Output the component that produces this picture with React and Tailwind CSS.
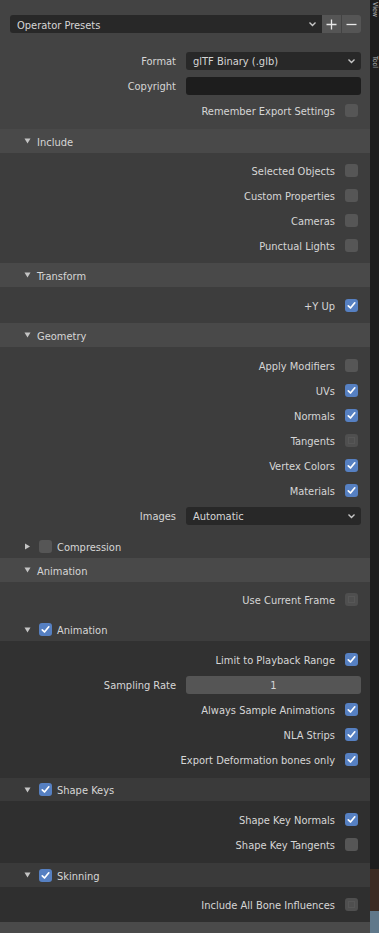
import React from "react";

const font = { fontFamily: '"DejaVu Sans Condensed", "DejaVu Sans", sans-serif' };
const txt = "text-[11px] text-[#d6d6d6] leading-none pt-[2px]";

function Check({ checked, disabled }) {
  if (checked) {
    return (
      <div className="w-[13px] h-[13px] rounded-[3px] bg-[#5680c2] flex items-center justify-center shrink-0">
        <svg width="11" height="11" viewBox="0 0 11 11">
          <polyline points="2.3,5.8 4.5,8 8.8,2.8" fill="none" stroke="#ffffff" strokeWidth="1.7" strokeLinecap="round" strokeLinejoin="round" />
        </svg>
      </div>
    );
  }
  if (disabled) {
    return (
      <div className="w-[13px] h-[13px] rounded-[3px] bg-[#4f4f4f] flex items-center justify-center shrink-0">
        <div className="w-[7px] h-[7px] border border-[#575757]" />
      </div>
    );
  }
  return <div className="w-[13px] h-[13px] rounded-[3px] bg-[#565656] shrink-0" />;
}

function CheckRow({ label, checked, disabled }) {
  return (
    <div className="h-[25px] flex items-center justify-end pr-[12px] gap-[10px]">
      <span className={txt}>{label}</span>
      <Check checked={checked} disabled={disabled} />
    </div>
  );
}

function Chevron() {
  return (
    <svg width="9" height="6" viewBox="0 0 9 6">
      <polyline points="1.5,1.5 4.5,4.5 7.5,1.5" fill="none" stroke="#c8c8c8" strokeWidth="1.4" />
    </svg>
  );
}

function FieldRow({ label, children }) {
  return (
    <div className="h-[25px] flex items-center">
      <div className={`w-[176px] text-right ${txt}`}>{label}</div>
      <div className="ml-[10px] w-[175px] h-[18px]">{children}</div>
    </div>
  );
}

function Tri({ open = true }) {
  return open ? (
    <svg width="7" height="6" viewBox="0 0 7 6" className="shrink-0">
      <polygon points="0.5,0.5 6.5,0.5 3.5,5.5" fill="#c4c4c4" />
    </svg>
  ) : (
    <svg width="7" height="7" viewBox="0 0 7 7" className="shrink-0">
      <polygon points="1,0.5 6,3.5 1,6.5" fill="#c4c4c4" />
    </svg>
  );
}

function Header({ label, h = 24, bg = "bg-[#494949]" }) {
  return (
    <div className={`${bg} flex items-center pl-[24px]`} style={{ height: h }}>
      <Tri />
      <span className={`ml-[6px] ${txt}`}>{label}</span>
    </div>
  );
}

function SubHeader({ label, checked, open = true, h = 23, bg }) {
  return (
    <div className={`${bg} flex items-center pl-[24px]`} style={{ height: h }}>
      <Tri open={open} />
      <div className="ml-[8px]">
        <Check checked={checked} />
      </div>
      <span className={`ml-[5px] ${txt}`}>{label}</span>
    </div>
  );
}

export default function App() {
  return (
    <div className="flex w-[379px] h-[933px] overflow-hidden bg-[#1d1d1d]" style={font}>
      <div className="w-[370px] flex flex-col bg-[#3d3d3d]">
        {/* top area */}
        <div className="h-[129px] bg-[#434343] pt-[15px] pl-[10px]">
          <div className="flex h-[18px]">
            <div className="w-[312px] h-[18px] bg-[#282828] rounded-l-[3px] flex items-center pl-[7px] pr-[5px] justify-between">
              <span className={txt}>Operator Presets</span>
              <Chevron />
            </div>
            <div className="w-[19px] h-[18px] bg-[#555555] flex items-center justify-center">
              <svg width="11" height="11" viewBox="0 0 11 11"><path d="M5.5 0.5V10.5M0.5 5.5H10.5" stroke="#e8e8e8" strokeWidth="1.3" /></svg>
            </div>
            <div className="w-[19px] h-[18px] bg-[#555555] ml-[1px] rounded-r-[3px] flex items-center justify-center">
              <svg width="11" height="11" viewBox="0 0 11 11"><path d="M0.5 5.5H10.5" stroke="#e8e8e8" strokeWidth="1.3" /></svg>
            </div>
          </div>
          <div className="mt-[15px] -ml-[10px]">
            <FieldRow label="Format">
              <div className="h-full bg-[#282828] rounded-[3px] flex items-center justify-between pl-[7px] pr-[5px]">
                <span className={txt}>glTF Binary (.glb)</span>
                <Chevron />
              </div>
            </FieldRow>
            <FieldRow label="Copyright">
              <div className="h-full bg-[#1d1d1d] rounded-[3px]" />
            </FieldRow>
            <CheckRow label="Remember Export Settings" />
          </div>
        </div>

        <Header label="Include" />
        <div className="pt-[5px] pb-[5px]">
          <CheckRow label="Selected Objects" />
          <CheckRow label="Custom Properties" />
          <CheckRow label="Cameras" />
          <CheckRow label="Punctual Lights" />
        </div>

        <Header label="Transform" />
        <div className="pt-[6px] pb-[5px]">
          <CheckRow label="+Y Up" checked />
        </div>

        <Header label="Geometry" />
        <div className="pt-[6px] pb-[7px]">
          <CheckRow label="Apply Modifiers" />
          <CheckRow label="UVs" checked />
          <CheckRow label="Normals" checked />
          <CheckRow label="Tangents" disabled />
          <CheckRow label="Vertex Colors" checked />
          <CheckRow label="Materials" checked />
          <FieldRow label="Images">
            <div className="h-full bg-[#282828] rounded-[3px] flex items-center justify-between pl-[7px] pr-[5px]">
              <span className={txt}>Automatic</span>
              <Chevron />
            </div>
          </FieldRow>
        </div>
        <SubHeader label="Compression" open={false} bg="bg-[#3d3d3d]" />

        <Header label="Animation" />
        <div className="pt-[5px] pb-[6px]">
          <CheckRow label="Use Current Frame" disabled />
        </div>
        <SubHeader label="Animation" checked bg="bg-[#3d3d3d]" />
        <div className="pt-[6px] pb-[6px] bg-[#313131]">
          <CheckRow label="Limit to Playback Range" checked />
          <FieldRow label="Sampling Rate">
            <div className="h-full bg-[#555555] rounded-[3px] flex items-center justify-center">
              <span className={txt}>1</span>
            </div>
          </FieldRow>
          <CheckRow label="Always Sample Animations" checked />
          <CheckRow label="NLA Strips" checked />
          <CheckRow label="Export Deformation bones only" checked />
        </div>

        <SubHeader label="Shape Keys" checked bg="bg-[#3a3a3a]" />
        <div className="pt-[6px] pb-[6px] bg-[#2f2f2f]">
          <CheckRow label="Shape Key Normals" checked />
          <CheckRow label="Shape Key Tangents" />
        </div>

        <SubHeader label="Skinning" checked h={24} bg="bg-[#3a3a3a]" />
        <div className="pt-[5px] pb-[5px] bg-[#2f2f2f]">
          <CheckRow label="Include All Bone Influences" disabled />
        </div>
        <div className="flex-1 bg-[#4a4a4a]" />
      </div>

      {/* right tab strip */}
      <div className="w-[9px] flex flex-col bg-[#1d1d1d] overflow-hidden">
        <div className="h-[42px] flex justify-center pt-[2px]">
          <span className="text-[7px] text-[#b5b5b5] leading-none [writing-mode:vertical-rl]">View</span>
        </div>
        <div className="h-[120px] flex justify-center pt-[14px]">
          <span className="text-[7px] text-[#b5b5b5] leading-none [writing-mode:vertical-rl]">Tool</span>
        </div>
        <div className="flex-1" />
        <div className="h-[42px] bg-[#3b2b22]" />
        <div className="h-[22px] bg-[#60788a]" />
      </div>
    </div>
  );
}
